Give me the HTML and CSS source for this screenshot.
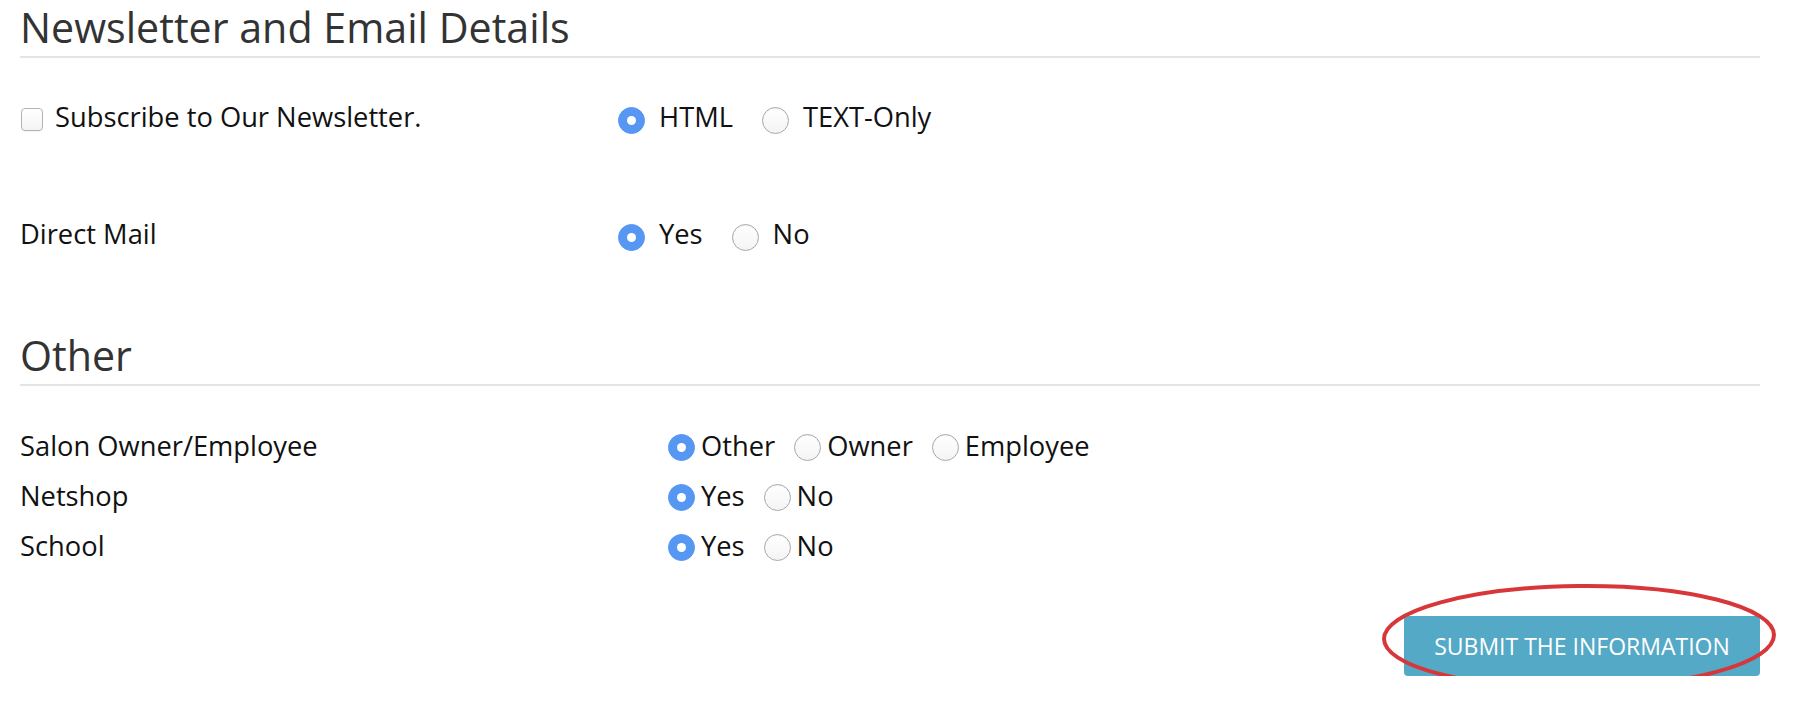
FILE: index.html
```html
<!DOCTYPE html>
<html lang="en">
<head>
<meta charset="utf-8">
<title>Newsletter and Email Details</title>
<link rel="stylesheet" href="styles.css">
</head>
<body>
<div class="page">
  <section class="sec sec-news">
    <h2 class="sec-title">Newsletter and Email Details</h2>
    <div class="row">
      <label class="cell-label check-label"><input type="checkbox" class="chk"><span>Subscribe to Our Newsletter.</span></label>
      <div class="opts">
        <label class="opt"><input type="radio" class="rad" name="fmt" checked><span>HTML</span></label>
        <label class="opt"><input type="radio" class="rad" name="fmt"><span>TEXT-Only</span></label>
      </div>
    </div>
    <div class="row row-next">
      <div class="cell-label">Direct Mail</div>
      <div class="opts">
        <label class="opt"><input type="radio" class="rad" name="dm" checked><span>Yes</span></label>
        <label class="opt"><input type="radio" class="rad" name="dm"><span>No</span></label>
      </div>
    </div>
  </section>

  <section class="sec sec-other">
    <h2 class="sec-title">Other</h2>
    <div class="rows-tight">
      <div class="row row-tight">
        <div class="cell-label">Salon Owner/Employee</div>
        <div class="opts opts-tight">
          <label class="opt"><input type="radio" class="rad" name="salon" checked><span>Other</span></label>
          <label class="opt"><input type="radio" class="rad" name="salon"><span>Owner</span></label>
          <label class="opt"><input type="radio" class="rad" name="salon"><span>Employee</span></label>
        </div>
      </div>
      <div class="row row-tight">
        <div class="cell-label">Netshop</div>
        <div class="opts opts-tight">
          <label class="opt"><input type="radio" class="rad" name="netshop" checked><span>Yes</span></label>
          <label class="opt"><input type="radio" class="rad" name="netshop"><span>No</span></label>
        </div>
      </div>
      <div class="row row-tight">
        <div class="cell-label">School</div>
        <div class="opts opts-tight">
          <label class="opt"><input type="radio" class="rad" name="school" checked><span>Yes</span></label>
          <label class="opt"><input type="radio" class="rad" name="school"><span>No</span></label>
        </div>
      </div>
    </div>
  </section>

  <div class="actions">
    <div class="submit-wrap">
      <button type="submit" class="btn-submit">Submit the Information</button>
      <svg class="annot" viewBox="0 0 396 108" aria-hidden="true">
        <ellipse cx="198" cy="54" rx="195" ry="51" fill="none" stroke="#d8373a" stroke-width="4" transform="rotate(-0.6 198 54)"/>
      </svg>
    </div>
  </div>
</div>
</body>
</html>
```

FILE: styles.css
```css
* { box-sizing: border-box; }

html, body {
  margin: 0;
  padding: 0;
  background: #ffffff;
}

body {
  font-family: "Open Sans", "Noto Sans", "Liberation Sans", sans-serif;
  font-size: 27.3px;
  color: #111111;
}

.page {
  width: 1760px;
  padding-left: 20px;
}

.sec-title {
  margin: 0;
  font-size: 41.2px;
  font-weight: 400;
  line-height: 54px;
  color: #333333;
  padding-bottom: 2px;
  border-bottom: 2px solid #e4e4e4;
}

.sec-other {
  margin-top: 74px;
}

.row {
  display: grid;
  grid-template-columns: 598px 1fr;
  height: 40px;
  line-height: 40px;
  margin-top: 39px;
}

.row-next {
  margin-top: 77px;
}

.rows-tight {
  margin-top: 40px;
  display: flex;
  flex-direction: column;
  gap: 10px;
}

.row-tight {
  grid-template-columns: 648px 1fr;
  margin-top: 0;
}

.cell-label {
  white-space: nowrap;
}

.check-label {
  display: flex;
  align-items: flex-start;
  gap: 12px;
}

.chk {
  appearance: none;
  -webkit-appearance: none;
  margin: 11px 0 0 1px;
  width: 22px;
  height: 23px;
  border: 1px solid #b4b4b4;
  border-radius: 4px;
  background: linear-gradient(#ffffff, #f4f4f4);
  box-shadow: 0 1px 1px rgba(0, 0, 0, 0.06);
  flex: none;
}

.opts {
  display: flex;
  align-items: flex-start;
  gap: 29px;
}

.opts-tight {
  gap: 19px;
}

.opt {
  display: flex;
  align-items: flex-start;
  gap: 14px;
  white-space: nowrap;
}

.opts-tight .opt {
  gap: 6px;
}

.rad {
  appearance: none;
  -webkit-appearance: none;
  margin: 10px 0 0 0;
  width: 27px;
  height: 27px;
  border-radius: 50%;
  border: 1px solid #a8a8a8;
  background: linear-gradient(#ffffff, #f4f4f4);
  box-shadow: inset 0 1px 1px rgba(0, 0, 0, 0.05);
  flex: none;
  position: relative;
}

.opts-tight .rad {
  margin-top: 8px;
}

.rad:checked {
  border-color: #5597f2;
  background: #5597f2;
  box-shadow: none;
}

.rad:checked::after {
  content: "";
  position: absolute;
  left: 50%;
  top: 50%;
  width: 9px;
  height: 9px;
  margin: -4.5px 0 0 -4.5px;
  border-radius: 50%;
  background: #ffffff;
}

.actions {
  margin-top: 50px;
  display: flex;
  justify-content: flex-end;
}

.submit-wrap {
  position: relative;
  width: 356px;
}

.btn-submit {
  display: block;
  width: 356px;
  height: 60px;
  border: 0;
  border-radius: 4px;
  background: #54a9c7;
  color: #ffffff;
  font-family: "Open Sans", "Noto Sans", "Liberation Sans", sans-serif;
  font-size: 23px;
  font-weight: 400;
  text-transform: uppercase;
  padding: 0;
}

.annot {
  position: absolute;
  left: -23px;
  top: -33px;
  width: 396px;
  height: 108px;
  pointer-events: none;
}
```
